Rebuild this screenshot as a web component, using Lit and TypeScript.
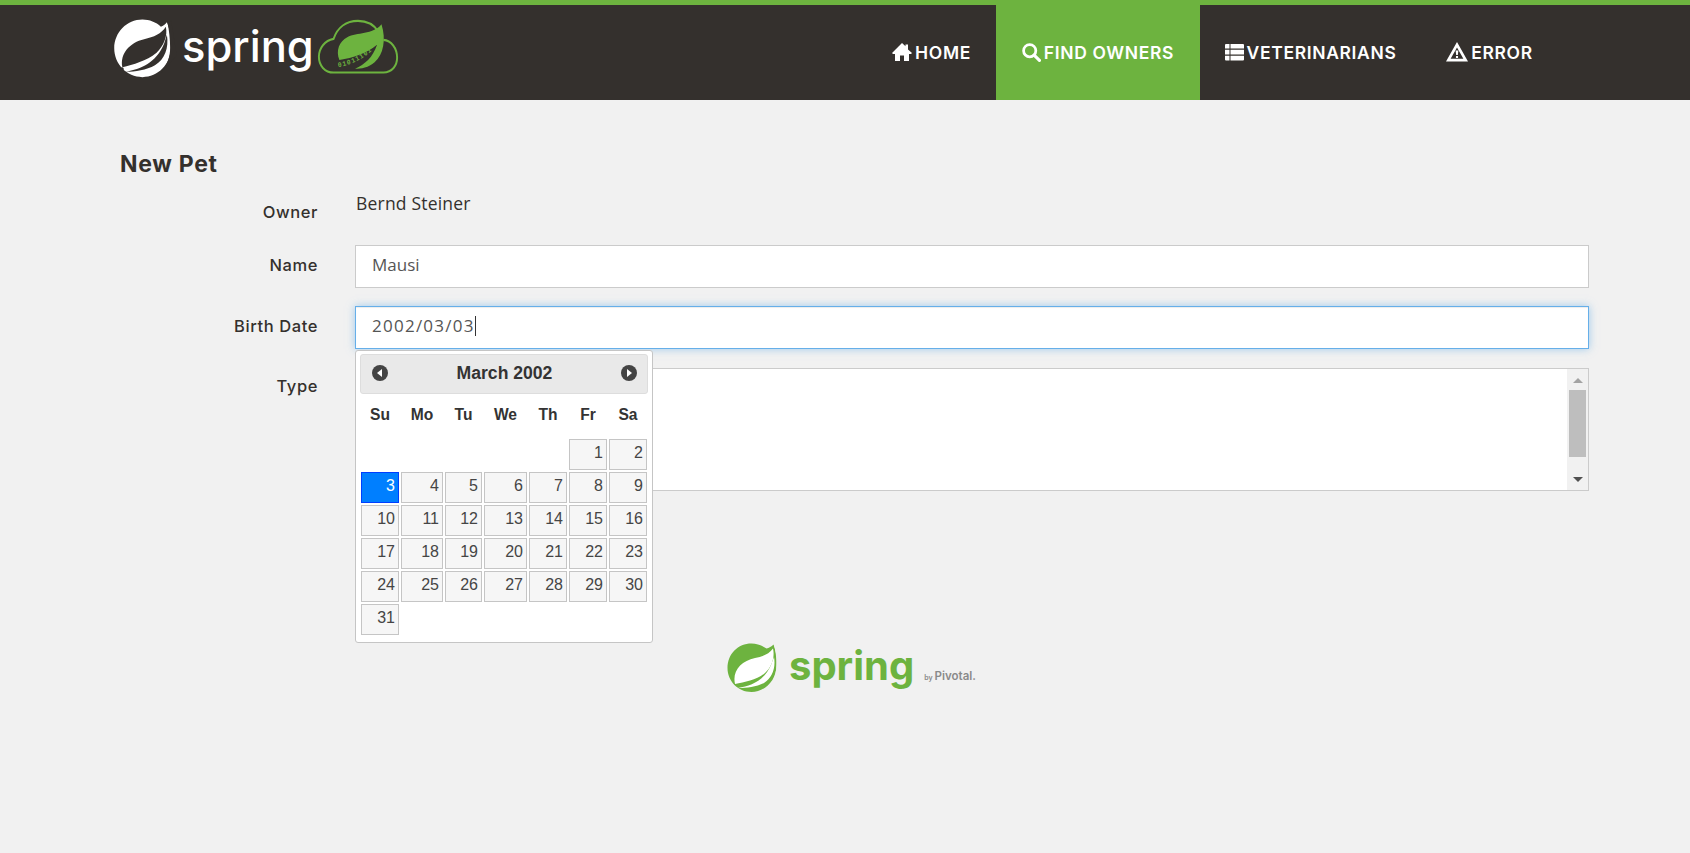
import { LitElement, html, css, svg } from "lit";
import { customElement } from "lit/decorators.js";

const DARK = "#34302d";
const GREEN = "#6db33f";

const leafLogo = svg`<svg class="leaf" width="76" height="76" viewBox="0 0 70 70">
  <path fill="#fff" d="M57 9.5 C60 17 61.5 25 60.5 33.5 C60.5 48 49 60 34.5 60 C20 60 8.5 48 8.5 33.5 C8.5 19 20 7 34.5 7 C41 7 47 9.5 51.5 13.5 C53.5 13 55.5 11.5 57 9.5Z"/>
  <path fill="${DARK}" d="M16 51 C13.5 38 23 28 36 25 C45 23 52 20 56 13.5 C58 22 54 31 47.5 37.5 C38 45.5 26 48 16 51Z"/>
  <path fill="${DARK}" d="M19 55 C33 52.5 47 47 54.5 29 L57 21 C59 33 55 44 46 49 C38 53.5 28 55 19 55Z"/>
  <path fill="${DARK}" d="M57.5 9 L61 8 L66 40 L52 56 C58 48 60 40 60 33 C60 25 59 17 57.5 9Z"/>
  <circle cx="15.7" cy="52.5" r="1.6" fill="${DARK}"/>
</svg>`;

const cloudLogo = svg`<svg class="cloud" width="88" height="76" viewBox="0 0 90 70" preserveAspectRatio="none">
  <path fill="none" stroke="${GREEN}" stroke-width="2" d="M66 21 C61 14 54 11 45 11 C33 11 24 17 20 27.5 C11 29 5 36 5 44 C5 52 11 58.5 20 58.5 L71 58.5 C80 58.5 85 52 85 45 C85 36 79 29 71 28.5"/>
  <path fill="${GREEN}" d="M69 14 C74 28 71 42 62 49 C56 54 48 55 42 55 C52 51 60 45 64.5 33 C54 41 40 45 26 47 C22 38 26 30 34 26 C44 21 60 24 69 14Z"/>
  <path id="dg" fill="none" d="M25 53.5 C36 52 50 47 62 36"/>
  <text font-family="Liberation Mono, monospace" font-size="6.4" font-weight="700" letter-spacing="1" fill="${GREEN}"><textPath href="#dg">01011101</textPath></text>
</svg>`;

const footLeaf = svg`<svg width="50" height="50" viewBox="0 0 50 50">
  <path fill="${GREEN}" d="M46.5 1.5 C49 8 50 14 49.5 21 C50 37 38 49 24.5 49 C11 49 .5 38 .5 25 C.5 11 11 .5 24.5 .5 C30 .5 35 2.5 39.5 5.5 C42 5 44.5 3.5 46.5 1.5Z"/>
  <path fill="#fff" d="M8 41 C5 28 14 18 28 15 C36 13.5 42 11 46 5.5 C48 14 45 24 38 30 C30 37 18 39 8 41Z"/>
  <path fill="#fff" d="M11 45 C24 43 37 38 44 22 L47 14 C49 25 45 35 37 40 C29 44 20 45 11 45Z"/>
  <path fill="#f1f1f1" d="M46.8 1 L50 .5 L50 30 L44 42 C48 35 49.5 28 49.5 21 C49.5 14 48.5 8 46.8 1Z"/>
</svg>`;

const homeIcon = svg`<svg width="20" height="18" viewBox="0 0 20 18"><path fill="#fff" d="M10 0 L13.5 3.2 V1.5 H16 V6.6 L20 10 L19 11 H17 V18 H12 V12.5 H8 V18 H3 V11 H1 L0 10Z"/></svg>`;
const searchIcon = svg`<svg width="19" height="19" viewBox="0 0 18 18"><circle cx="7.3" cy="7.3" r="5.8" fill="none" stroke="#fff" stroke-width="2.6"/><path d="M11.5 11.5 L16.5 16.5" stroke="#fff" stroke-width="3" stroke-linecap="round"/></svg>`;
const listIcon = svg`<svg width="19" height="17" viewBox="0 0 19 17"><path fill="#fff" d="M0 1 Q0 0 1 0 H4.5 V4.6 H0Z M5.5 0 H18 Q19 0 19 1 V4.6 H5.5Z M0 5.8 H4.5 V10.6 H0Z M5.5 5.8 H19 V10.6 H5.5Z M0 11.8 H4.5 V16.4 H1 Q0 16.4 0 15.4Z M5.5 11.8 H19 V15.4 Q19 16.4 18 16.4 H5.5Z"/></svg>`;
const warnIcon = svg`<svg width="22" height="20" viewBox="0 0 21 19"><path fill="#fff" fill-rule="evenodd" d="M10.5 0 L21 18.5 H0Z M10.5 5.2 L4.4 16 H16.6Z"/><path fill="#fff" d="M9.2 8 H11.8 L11.3 12.4 H9.7Z M9.5 13.2 H11.5 V15.2 H9.5Z"/></svg>`;

const NAV = [
  { label: "HOME", icon: homeIcon, w: 129 },
  { label: "FIND OWNERS", icon: searchIcon, w: 204, active: true },
  { label: "VETERINARIANS", icon: listIcon, w: 221 },
  { label: "ERROR", icon: warnIcon, w: 137 },
];

const COLS = ["Su", "Mo", "Tu", "We", "Th", "Fr", "Sa"];

@customElement("app-root")
export class AppRoot extends LitElement {
  static styles = css`
    :host {
      display: block;
      min-height: 853px;
      background: #f1f1f1;
      color: #34302d;
      font-family: "Open Sans", sans-serif;
    }
    .topbar {
      display: flex;
      justify-content: space-between;
      height: 95px;
      background: #34302d;
      border-top: 5px solid #6db33f;
      padding-right: 132px;
      padding-left: 105px;
    }
    .brand {
      display: flex;
      align-items: flex-start;
      padding-top: 7px;
    }
    .word {
      font-family: "Inter", sans-serif;
      font-size: 43.5px;
      line-height: 60px;
      font-weight: 500;
      color: #fff;
      width: 132px;
      margin: 4px 0 0 1px;
    }
    .cloud {
      margin-top: -3px;
    }
    .nav {
      display: flex;
    }
    .nav a {
      display: flex;
      align-items: center;
      justify-content: center;
      gap: 3px;
      height: 95px;
      padding-bottom: 1px;
      box-sizing: border-box;
      color: #fff;
      font-family: "Inter", sans-serif;
      font-weight: 600;
      font-size: 17.5px;
      letter-spacing: 0.65px;
    }
    .nav a.active {
      background: #6db33f;
    }
    main {
      padding: 0 101px 0 120px;
    }
    h2 {
      margin: 0;
      padding-top: 50px;
      font-family: "Inter", sans-serif;
      font-size: 23px;
      line-height: 28px;
      font-weight: 700;
      letter-spacing: 0.7px;
    }
    .form {
      display: grid;
      grid-template-columns: 198px 1fr;
      column-gap: 37px;
      margin-top: 10px;
    }
    label {
      font-family: "Inter", sans-serif;
      font-weight: 500;
      font-size: 16.5px;
      letter-spacing: 0.6px;
      text-align: right;
    }
    .l-owner { padding-top: 13px; line-height: 22px; height: 57px; box-sizing: border-box; }
    .l-name { padding-top: 9px; line-height: 22px; }
    .l-date { padding-top: 9px; line-height: 22px; }
    .l-type { padding-top: 8px; line-height: 22px; }
    .owner {
      font-size: 17.5px;
      letter-spacing: 0.2px;
      line-height: 22px;
      padding-top: 4px;
      padding-left: 1px;
    }
    .field {
      position: relative;
      margin-bottom: 18px;
    }
    .box {
      height: 43px;
      box-sizing: border-box;
      border: 1px solid #cbcbcb;
      background: #fff;
      padding: 0 16px;
      font-size: 17px;
      line-height: 38px;
      color: #555;
    }
    .box.focus {
      border-color: #66afe9;
      box-shadow: 0 0 8px rgba(102, 175, 233, 0.6), inset 0 1px 1px rgba(0, 0, 0, 0.075);
      letter-spacing: 1.25px;
    }
    .caret {
      display: inline-block;
      width: 1px;
      height: 20px;
      background: #333;
      vertical-align: -4px;
    }
    .list {
      display: flex;
      justify-content: flex-end;
      height: 123px;
      box-sizing: border-box;
      border: 1px solid #cbcbcb;
      background: #fff;
      margin-top: 1px;
    }
    .sb {
      position: relative;
      width: 21px;
      background: #f1f1f1;
      display: flex;
      flex-direction: column;
      align-items: center;
      justify-content: space-between;
      padding: 9px 0 8px;
      box-sizing: border-box;
    }
    .thumb {
      position: absolute;
      top: 21px;
      left: 2px;
      width: 17px;
      height: 67px;
      background: #bebebe;
    }
    .up { width: 0; height: 0; border: 5px solid transparent; border-top: 0; border-bottom: 5px solid #a3a3a3; }
    .down { width: 0; height: 0; border: 5px solid transparent; border-bottom: 0; border-top: 5px solid #505050; }
    .dp {
      position: absolute;
      z-index: 2;
      left: 0;
      top: 44px;
      width: 298px;
      box-sizing: border-box;
      background: #fff;
      border: 1px solid #c5c5c5;
      border-radius: 3px;
      padding: 3px 4px 7px;
      font-family: "Liberation Sans", Arial, sans-serif;
    }
    .dp-head {
      display: flex;
      align-items: center;
      justify-content: space-between;
      height: 40px;
      box-sizing: border-box;
      padding: 0 10px 2px 11px;
      background: #e9e9e9;
      border: 1px solid #dddddd;
      border-radius: 3px;
      font-size: 17.6px;
      font-weight: 700;
      color: #333;
    }
    .days {
      display: grid;
      grid-template-columns: 38px 42px 37px 43px 38px 38px 38px;
      gap: 2px;
      margin-left: 1px;
    }
    .wd {
      height: 43px;
      padding-top: 9px;
      box-sizing: border-box;
      text-align: center;
      font-size: 15.6px;
      font-weight: 700;
      line-height: 24px;
      color: #333;
    }
    .d {
      height: 31px;
      box-sizing: border-box;
      border: 1px solid #c5c5c5;
      background: #f6f6f6;
      color: #454545;
      font-size: 16px;
      line-height: 25px;
      text-align: right;
      padding-right: 3px;
    }
    .d.sel {
      background: #007fff;
      border-color: #003eff;
      color: #fff;
    }
    .foot {
      display: flex;
      align-items: flex-start;
      margin: 152px 0 0 607px;
      height: 60px;
    }
    .foot .fw {
      font-family: "Inter", sans-serif;
      font-size: 40px;
      font-weight: 700;
      line-height: 52px;
      color: #6db33f;
      margin-left: 12px;
      margin-top: -3px;
    }
    .foot .by {
      font-family: "Inter", sans-serif;
      font-size: 11.5px;
      font-weight: 600;
      color: #8a8a8a;
      margin-left: 10px;
      margin-top: 26px;
    }
    .foot .by small { font-size: 7px; margin-right: 2px; }
  `;

  private days() {
    const cells = [];
    for (let i = 0; i < 5; i++) cells.push(html`<div></div>`);
    for (let d = 1; d <= 31; d++) {
      cells.push(html`<div class="d ${d === 3 ? "sel" : ""}">${d}</div>`);
    }
    return cells;
  }

  render() {
    return html`
      <header class="topbar">
        <div class="brand">
          ${leafLogo}
          <div class="word">spring</div>
          ${cloudLogo}
        </div>
        <nav class="nav">
          ${NAV.map(
            (n) => html`<a class="${n.active ? "active" : ""}" style="width:${n.w}px">${n.icon}<span>${n.label}</span></a>`
          )}
        </nav>
      </header>
      <main>
        <h2>New Pet</h2>
        <div class="form">
          <label class="l-owner">Owner</label>
          <div class="owner">Bernd Steiner</div>
          <label class="l-name">Name</label>
          <div class="field"><div class="box">Mausi</div></div>
          <label class="l-date">Birth Date</label>
          <div class="field">
            <div class="box focus">2002/03/03<span class="caret"></span></div>
            <div class="dp">
              <div class="dp-head">
                <svg width="16" height="16" viewBox="0 0 16 16"><circle cx="8" cy="8" r="8" fill="#444"/><path d="M10 4 L5 8 L10 12Z" fill="#fff"/></svg>
                <span>March 2002</span>
                <svg width="16" height="16" viewBox="0 0 16 16"><circle cx="8" cy="8" r="8" fill="#444"/><path d="M6 4 L11 8 L6 12Z" fill="#fff"/></svg>
              </div>
              <div class="days">
                ${COLS.map((c) => html`<div class="wd">${c}</div>`)}
                ${this.days()}
              </div>
            </div>
          </div>
          <label class="l-type">Type</label>
          <div class="list">
            <div class="sb"><div class="up"></div><div class="thumb"></div><div class="down"></div></div>
          </div>
        </div>
        <div class="foot">
          ${footLeaf}
          <span class="fw">spring</span>
          <span class="by"><small>by</small>Pivotal.</span>
        </div>
      </main>
    `;
  }
}
